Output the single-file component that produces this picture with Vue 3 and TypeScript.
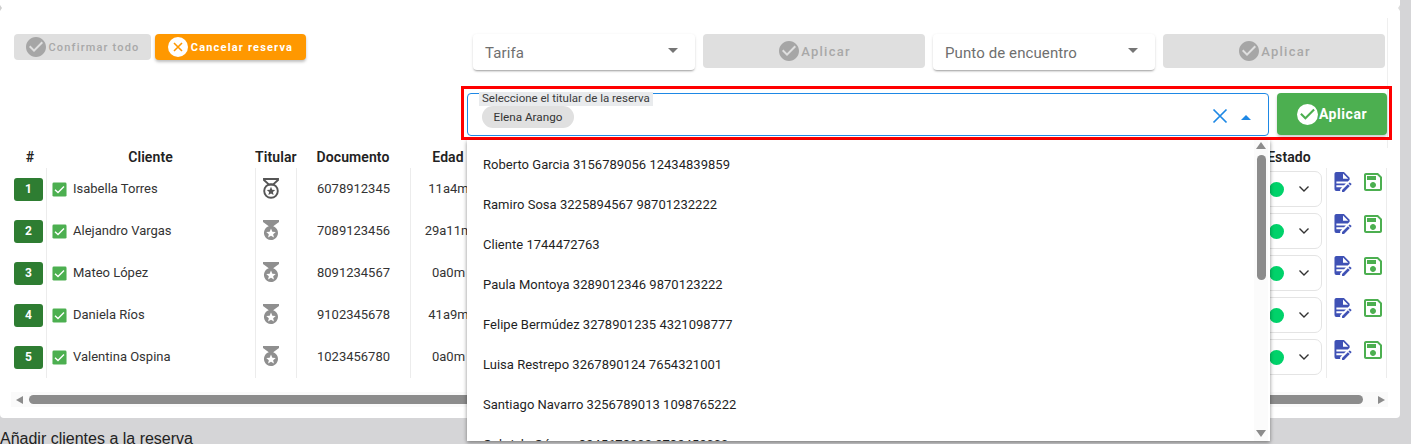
<script setup lang="ts">
interface Row { n: number; name: string; doc: string; age: string }
const rows: Row[] = [
  { n: 1, name: 'Isabella Torres', doc: '6078912345', age: '11a4m' },
  { n: 2, name: 'Alejandro Vargas', doc: '7089123456', age: '29a11m' },
  { n: 3, name: 'Mateo López', doc: '8091234567', age: '0a0m' },
  { n: 4, name: 'Daniela Ríos', doc: '9102345678', age: '41a9m' },
  { n: 5, name: 'Valentina Ospina', doc: '1023456780', age: '0a0m' },
]
const options: string[] = [
  'Roberto Garcia 3156789056 12434839859',
  'Ramiro Sosa 3225894567 98701232222',
  'Cliente 1744472763',
  'Paula Montoya 3289012346 9870123222',
  'Felipe Bermúdez 3278901235 4321098777',
  'Luisa Restrepo 3267890124 7654321001',
  'Santiago Navarro 3256789013 1098765222',
  'Gabriela Gómez 3245678902 8732452000',
]
const checkCircle = 'M12 2C6.5 2 2 6.5 2 12S6.5 22 12 22 22 17.5 22 12 17.5 2 12 2M10 17L5 12L6.41 10.59L10 14.17L17.59 6.58L19 8L10 17Z'
const checkOutline = 'M10 17L5 12L6.41 10.59L10 14.17L17.59 6.58L19 8L10 17Z'
</script>

<template>
  <div class="page">
    <i class="tick tick-left"></i>
    <i class="tick tick-right"></i>
    <div class="card">
      <div class="controls">
        <div class="top-row">
          <div class="left-actions">
            <button class="btn small disabled" type="button">
              <svg class="ic20" viewBox="2 2 20 20"><path :d="checkCircle" fill="#a6a6a6" /></svg>
              <span>Confirmar todo</span>
            </button>
            <button class="btn small orange" type="button">
              <svg class="ic20" viewBox="2 2 20 20">
                <circle cx="12" cy="12" r="10" fill="#fff" />
                <path d="M8 8L16 16M16 8L8 16" stroke="#ff9800" stroke-width="1.6" fill="none" />
              </svg>
              <span>Cancelar reserva</span>
            </button>
          </div>
          <div class="right-actions">
            <div class="select">
              <span>Tarifa</span>
              <i class="caret"></i>
            </div>
            <button class="btn apply disabled" type="button">
              <svg class="ic20" viewBox="2 2 20 20"><path :d="checkCircle" fill="#a6a6a6" /></svg>
              <span>Aplicar</span>
            </button>
            <div class="select">
              <span>Punto de encuentro</span>
              <i class="caret"></i>
            </div>
            <button class="btn apply disabled" type="button">
              <svg class="ic20" viewBox="2 2 20 20"><path :d="checkCircle" fill="#a6a6a6" /></svg>
              <span>Aplicar</span>
            </button>
          </div>
        </div>

        <div class="highlight">
          <div class="owner-field">
            <span class="legend">Seleccione el titular de la reserva</span>
            <span class="chip">Elena Arango</span>
            <svg class="clear" viewBox="0 0 16 16"><path d="M1.5 1.5L14.5 14.5M14.5 1.5L1.5 14.5" stroke="#1e88e5" stroke-width="1.7" fill="none" /></svg>
            <i class="caret-up"></i>
          </div>
          <button class="btn confirm" type="button">
            <svg class="ic21" viewBox="2 2 20 20">
              <circle cx="12" cy="12" r="10" fill="#fff" />
              <path :d="checkOutline" fill="#4caf50" />
            </svg>
            <span>Aplicar</span>
          </button>
        </div>
      </div>

      <div class="table">
        <div class="tr head">
          <div class="th">#</div>
          <div class="th">Cliente</div>
          <div class="th">Titular</div>
          <div class="th">Documento</div>
          <div class="th">Edad</div>
          <div class="th"></div>
          <div class="th estado">Estado</div>
          <div class="th"></div>
        </div>
        <div v-for="r in rows" :key="r.n" class="tr">
          <div class="td idx"><span class="badge">{{ r.n }}</span></div>
          <div class="td client">
            <svg class="check" viewBox="0 0 16 16">
              <rect x="0.5" y="0.5" width="15" height="15" rx="1.5" fill="#4caf50" />
              <path d="M3.2 8.2L6.4 11.2L12.8 4.8" stroke="#fff" stroke-width="1.5" fill="none" />
            </svg>
            <span>{{ r.name }}</span>
          </div>
          <div class="td center medal-cell">
            <svg v-if="r.n === 1" class="medal" viewBox="0 0 24 24">
              <path d="M5 3H19V4L14 8.6H10L5 4Z" fill="none" stroke="#555" stroke-width="1.9" />
              <circle cx="12" cy="15" r="6.8" fill="none" stroke="#555" stroke-width="1.9" />
              <path d="M12 10.8L13.2 13.7L16.2 14L13.9 16L14.6 19L12 17.4L9.4 19L10.1 16L7.8 14L10.8 13.7Z" fill="#555" />
            </svg>
            <svg v-else class="medal" viewBox="0 0 24 24">
              <path fill="#8f8f8f" d="M20,2H4V4L9.81,8.36C6.14,9.57 4.14,13.53 5.35,17.2C6.56,20.87 10.5,22.87 14.19,21.66C17.86,20.45 19.86,16.5 18.65,12.82C17.95,10.71 16.3,9.05 14.19,8.36L20,4V2M14.94,19.5L12,17.73L9.06,19.5L9.84,16.17L7.25,13.93L10.66,13.64L12,10.5L13.33,13.64L16.74,13.93L14.15,16.17L14.94,19.5Z" />
            </svg>
          </div>
          <div class="td center">{{ r.doc }}</div>
          <div class="td center">{{ r.age }}</div>
          <div class="td"></div>
          <div class="td status-cell">
            <div class="status">
              <i class="dot"></i>
              <svg class="chev" viewBox="0 0 12 8"><path d="M1.5 1.5L6 6L10.5 1.5" stroke="#333" stroke-width="1.4" fill="none" /></svg>
            </div>
          </div>
          <div class="td tools">
            <svg class="tool" viewBox="3.5 2 19 21"><path fill="#3f51b5" d="M6,2C4.89,2 4,2.89 4,4V20A2,2 0 0,0 6,22H10V20.09L12.09,18H6V16H14.09L16.09,14H6V12H18.09L20,10.09V8L14,2H6M13,3.5L18.5,9H13V3.5M20.15,13C20,13 19.86,13.05 19.75,13.16L18.73,14.18L20.82,16.26L21.84,15.25C22.05,15.03 22.05,14.67 21.84,14.46L20.54,13.16C20.43,13.05 20.29,13 20.15,13M18.14,14.77L12,20.92V23H14.08L20.23,16.85L18.14,14.77Z" /></svg>
            <svg class="tool save" viewBox="3 3 18 18"><path fill="#4caf50" d="M17 3H5C3.89 3 3 3.9 3 5V19C3 20.1 3.89 21 5 21H19C20.1 21 21 20.1 21 19V7L17 3M19 19H5V5H16.17L19 7.83V19M12 12C10.34 12 9 13.34 9 15S10.34 18 12 18 15 16.66 15 15 13.66 12 12 12M6 6H15V10H6V6Z" /></svg>
          </div>
        </div>
      </div>

      <div class="hscroll">
        <i class="arrow-left"></i>
        <div class="hthumb"></div>
        <i class="arrow-right"></i>
      </div>
    </div>

    <p class="add-clients">Añadir clientes a la reserva</p>

    <div class="menu">
      <div v-for="o in options" :key="o" class="option">{{ o }}</div>
      <div class="vscroll">
        <i class="arrow-up"></i>
        <div class="vthumb"></div>
        <i class="arrow-down"></i>
      </div>
    </div>
  </div>
</template>

<style>
html, body { margin: 0; padding: 0; overflow: hidden; }
</style>

<style scoped>
.page {
  position: relative;
  width: 1411px;
  height: 444px;
  overflow: hidden;
  background: #d5d5d7;
  font-family: Roboto, "Liberation Sans", sans-serif;
  color: #212121;
}
.tick {
  position: absolute;
  top: 5px;
  width: 0;
  height: 0;
  z-index: 1;
  border-top: 3px solid transparent;
  border-bottom: 3px solid transparent;
}
.tick-left { left: 0; border-left: 2px solid #cfcfcf; }
.tick-right { left: 1398px; border-right: 2px solid #dcdcdc; }
.card {
  width: 1400px;
  height: 418px;
  box-sizing: border-box;
  padding-top: 18px;
  background: #fff;
  border-radius: 0 0 4px 4px;
}
.controls {
  width: 1388px;
  height: 130px;
  padding-top: 16px;
  box-sizing: border-box;
  border-right: 1px solid #efefef;
}
.top-row {
  display: flex;
  justify-content: space-between;
  padding: 0 2px 0 14px;
  height: 52px;
}
.left-actions { display: flex; gap: 4px; align-items: flex-start; }
.right-actions { display: flex; gap: 8px; align-items: flex-start; }
.btn {
  display: flex;
  align-items: center;
  justify-content: center;
  border: 0;
  padding: 0;
  border-radius: 4px;
  font-family: Roboto, "Liberation Sans", sans-serif;
  font-weight: 500;
}
.small { height: 26px; font-size: 11px; letter-spacing: 1.18px; gap: 3px; }
.small:first-child { width: 137px; }
.orange {
  width: 151px;
  background: #ff9800;
  color: #fff;
  font-weight: 700;
  box-shadow: 0 2px 3px rgba(0, 0, 0, .25);
}
.disabled { background: #dfdfdf; color: #a8a8a8; }
.apply { width: 222px; height: 34px; font-size: 13px; letter-spacing: 1.25px; gap: 2px; padding-left: 2px; }
.ic20 { width: 20px; height: 20px; flex: none; }
.ic21 { width: 21px; height: 21px; flex: none; }
.select {
  width: 222px;
  height: 36px;
  box-sizing: border-box;
  padding: 0 17px 0 12px;
  display: flex;
  align-items: center;
  justify-content: space-between;
  background: #fff;
  border-radius: 4px;
  font-size: 15px;
  letter-spacing: .1px;
  color: #6f6f6f;
  box-shadow: 0 2px 2px -1px rgba(0, 0, 0, .3), 0 1px 3px rgba(0, 0, 0, .12);
}
.select span { padding-top: 2px; }
.caret {
  width: 0;
  height: 0;
  margin-top: -4px;
  border-left: 5px solid transparent;
  border-right: 5px solid transparent;
  border-top: 5px solid #757575;
}
.highlight {
  margin-left: 461px;
  width: 931px;
  height: 54px;
  box-sizing: border-box;
  border: 3px solid #f00;
  padding: 4px 2px 0 3px;
  display: flex;
  gap: 8px;
  align-items: flex-start;
}
.owner-field {
  position: relative;
  width: 802px;
  height: 43px;
  box-sizing: border-box;
  border: 1px solid #1e88e5;
  border-radius: 4px;
  padding: 12px 0 0 14px;
}
.legend {
  position: absolute;
  left: 11px;
  top: -2px;
  height: 14px;
  padding: 0 3px;
  background: #e9ebed;
  color: #3c3c3c;
  font-size: 11.5px;
  line-height: 12px;
  white-space: nowrap;
}
.chip {
  display: inline-flex;
  align-items: center;
  justify-content: center;
  width: 92px;
  height: 22px;
  border-radius: 11px;
  background: #e0e0e0;
  font-size: 11.7px;
  color: #333;
}
.clear {
  position: absolute;
  left: 744px;
  top: 14px;
  width: 16px;
  height: 16px;
}
.caret-up {
  position: absolute;
  left: 773px;
  top: 21px;
  width: 0;
  height: 0;
  border-left: 5px solid transparent;
  border-right: 5px solid transparent;
  border-bottom: 5px solid #1e88e5;
}
.confirm {
  width: 110px;
  height: 42px;
  gap: 1px;
  background: #4caf50;
  color: #fff;
  font-size: 14px;
  font-weight: 700;
  letter-spacing: .55px;
  box-shadow: 0 2px 3px rgba(0, 0, 0, .2);
}
.table { margin: 0 0 0 14px; width: 1373px; }
.tr {
  display: grid;
  grid-template-columns: 32px 209px 41px 114px 76px 764px 76px 61px;
  height: 42px;
}
.head { height: 20px; }
.th {
  font-size: 14px;
  font-weight: 600;
  letter-spacing: .1px;
  line-height: 19px;
  text-align: center;
  color: #222;
}
.estado { padding-left: 2px; }
.td {
  display: flex;
  align-items: center;
  font-size: 13px;
  color: #333;
  border-left: 1px solid #ececec;
  box-sizing: border-box;
  padding-bottom: 2px;
}
.idx { border-left: 0; align-items: flex-start; padding-top: 10px; }
.badge {
  width: 29px;
  height: 23px;
  padding-bottom: 1px;
  box-sizing: border-box;
  border-radius: 3px;
  background: #2e7d32;
  color: #fff;
  font-size: 12px;
  font-weight: 700;
  display: flex;
  align-items: center;
  justify-content: center;
}
.client { padding-left: 5px; gap: 6px; }
.check { width: 15px; height: 15px; flex: none; margin-top: 3px; }
.center { justify-content: center; }
.medal-cell { padding-right: 10px; }
.medal { width: 24px; height: 24px; }
.status-cell { border-left: 0; padding: 3px 4px 0 0; justify-content: flex-end; align-items: flex-start; }
.status {
  width: 72px;
  height: 36px;
  box-sizing: border-box;
  border: 1px solid #e4e4e4;
  border-radius: 7px;
  display: flex;
  align-items: center;
  justify-content: flex-end;
  gap: 14px;
  padding-right: 11px;
}
.dot { width: 15px; height: 15px; border-radius: 50%; background: #00d26a; }
.chev { width: 12px; height: 8px; }
.tools { gap: 12px; padding: 4px 0 0 7px; align-items: flex-start; border-right: 1px solid #ececec; }
.tool { width: 18px; height: 20px; flex: none; }
.save { width: 18px; height: 18px; margin-top: 1px; }
.hscroll {
  margin: 14px 0 0 11px;
  width: 1377px;
  height: 15px;
  background: #fafafa;
  display: flex;
  align-items: center;
  padding-left: 5px;
  box-sizing: border-box;
}
.hthumb { flex: none; width: 1334px; height: 9px; margin: 0 15px 0 6px; border-radius: 5px; background: #8c8c8c; }
.arrow-left {
  flex: none;
  width: 0; height: 0;
  border-top: 4.5px solid transparent;
  border-bottom: 4.5px solid transparent;
  border-right: 7px solid #8c8c8c;
}
.arrow-right {
  flex: none;
  width: 0; height: 0;
  border-top: 4.5px solid transparent;
  border-bottom: 4.5px solid transparent;
  border-left: 7px solid #8c8c8c;
}
.add-clients {
  margin: 12px 0 0;
  font-family: "Liberation Sans", Arial, sans-serif;
  font-size: 16px;
  line-height: 18px;
  color: #222;
}
.menu {
  position: absolute;
  left: 467px;
  top: 140px;
  width: 803px;
  height: 301px;
  overflow: hidden;
  background: #fff;
  box-shadow: 0 2px 4px rgba(0, 0, 0, .35), 0 0 4px rgba(0, 0, 0, .12);
}
.option {
  height: 40px;
  box-sizing: border-box;
  padding: 8px 0 0 16px;
  display: flex;
  align-items: center;
  font-size: 13px;
  letter-spacing: .02px;
  color: #1f1f1f;
}
.vscroll {
  position: absolute;
  right: 2px;
  top: 0;
  bottom: 0;
  width: 14px;
  background: #fbfbfb;
  display: flex;
  flex-direction: column;
  align-items: center;
  padding-top: 2px;
  box-sizing: border-box;
}
.vthumb { flex: none; width: 9px; height: 125px; margin-top: 6px; border-radius: 5px; background: #8c8c8c; }
.arrow-up {
  flex: none;
  width: 0; height: 0;
  border-left: 5px solid transparent;
  border-right: 5px solid transparent;
  border-bottom: 7px solid #8c8c8c;
}
.arrow-down {
  flex: none;
  width: 0; height: 0; margin-top: 150px;
  border-left: 5px solid transparent;
  border-right: 5px solid transparent;
  border-top: 7px solid #8c8c8c;
}
</style>
